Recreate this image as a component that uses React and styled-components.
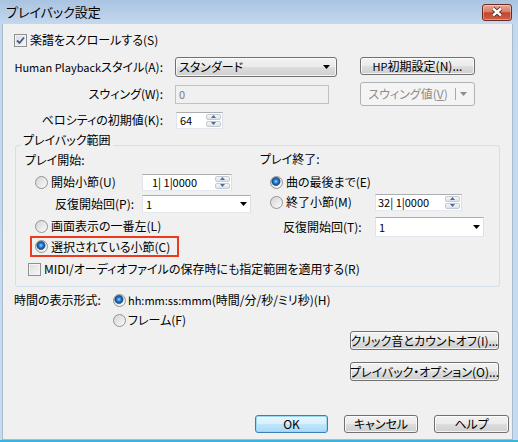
import React from "react";
import styled, { createGlobalStyle, css } from "styled-components";

const GlobalStyle = createGlobalStyle`
  * { box-sizing: border-box; }
  html, body { margin: 0; padding: 0; background: #f0f0f0; }
  body {
    font-family: "Noto Sans CJK JP", "Noto Sans", sans-serif;
    font-size: 12px;
    line-height: 14px;
    color: #000;
    font-feature-settings: "palt";
  }
`;

const Window = styled.div`
  width: 518px;
  height: 442px;
  display: flex;
  flex-direction: column;
  padding: 0 5px 0 2px;
  background: linear-gradient(to bottom, #a9c3e1 0, #c4d8ee 24px, #c6daf0 100%);
  border-bottom: 2px solid #3bb4dc;
`;

const TitleBar = styled.div`
  height: 24px;
  flex: none;
  display: flex;
  align-items: center;
  justify-content: space-between;
  padding: 0 1px 0 4px;
`;

const Title = styled.span`
  font-size: 13px;
  line-height: 16px;
`;

const CloseButton = styled.div`
  width: 30px;
  height: 17px;
  display: flex;
  align-items: center;
  justify-content: center;
  border: 1px solid #6e2b22;
  border-radius: 3px;
  background: linear-gradient(to bottom, #e6a795 0%, #d8806a 45%, #c4442b 52%, #cf6048 100%);
  box-shadow: inset 0 0 0 1px rgba(255, 255, 255, 0.35);
`;

const Client = styled.div`
  flex: 1;
  display: flex;
  flex-direction: column;
  background: #f0f0f0;
  border: 1px solid #a9bbd0;
  border-top: none;
  padding: 6px 3px 6px 11px;
`;

const Latin = styled.span`
  font-size: 11px;
`;

const CheckRow = styled.div`
  display: flex;
  align-items: center;
  gap: 3px;
  height: ${(p) => p.$h || 20}px;
  margin-top: ${(p) => p.$mt || 0}px;
  padding-left: ${(p) => p.$indent || 0}px;
  white-space: nowrap;
`;

const Box = styled.span`
  width: 13px;
  height: 13px;
  flex: none;
  display: flex;
  align-items: center;
  justify-content: center;
  border: 1px solid #8e8f8f;
  background: linear-gradient(135deg, #dcdcdc 0%, #f6f6f6 100%);
  box-shadow: inset 0 0 0 1px #f4f4f4;
`;

const Radio = styled.span`
  width: 13px;
  height: 13px;
  flex: none;
  border-radius: 50%;
  border: 1px solid #939393;
  background: linear-gradient(135deg, #d4d4d4 0%, #fbfbfb 100%);
  ${(p) =>
    p.$checked &&
    css`
      background: radial-gradient(circle at 45% 40%, #9fdcff 0, #2f86d6 1.8px, #0f4e92 3.6px, #6d7f94 4.4px, transparent 4.8px),
        linear-gradient(135deg, #d4d4d4 0%, #fbfbfb 100%);
    `}
`;

const SettingsGrid = styled.div`
  display: grid;
  grid-template-columns: 161px 185px 115px;
  grid-template-rows: 20px 24px 18px;
  row-gap: 5px;
  margin-top: 7px;
`;

const FieldLabel = styled.div`
  align-self: center;
  text-align: right;
  padding-right: 12px;
  white-space: nowrap;
`;

const Cell = styled.div`
  display: flex;
  align-items: ${(p) => p.$align || "center"};
`;

const Button = styled.div`
  width: ${(p) => p.$w}px;
  height: ${(p) => p.$h}px;
  display: flex;
  align-items: center;
  justify-content: center;
  gap: 4px;
  white-space: nowrap;
  border: 1px solid #707070;
  border-radius: 3px;
  background: linear-gradient(to bottom, #f2f2f2 0%, #ebebeb 48%, #dddddd 52%, #cfcfcf 100%);
  box-shadow: inset 0 0 0 1px rgba(255, 255, 255, 0.75);
  ${(p) =>
    p.$primary &&
    css`
      border-color: #3c7fb1;
      background: linear-gradient(to bottom, #eaf6fd 0%, #d9f0fc 48%, #bee6fd 52%, #a7d9f5 100%);
      box-shadow: inset 0 0 0 1px #9ad8f3;
    `}
  ${(p) =>
    p.$disabled &&
    css`
      color: #8d8d8d;
      border-color: #adb2b5;
      background: #f4f4f4;
      box-shadow: none;
    `}
`;

const Separator = styled.span`
  width: 1px;
  height: 12px;
  background: #a8a8a8;
  margin-left: 3px;
`;

const Combo = styled.div`
  width: ${(p) => p.$w}px;
  height: ${(p) => p.$h}px;
  display: flex;
  align-items: center;
  justify-content: space-between;
  padding: 0 6px 0 3px;
  border: 1px solid #707070;
  border-radius: 3px;
  background: linear-gradient(to bottom, #f2f2f2 0%, #ebebeb 48%, #dddddd 52%, #cfcfcf 100%);
  box-shadow: inset 0 0 0 1px rgba(255, 255, 255, 0.75);
`;

const Edit = styled.div`
  width: ${(p) => p.$w}px;
  height: ${(p) => p.$h}px;
  margin-left: ${(p) => p.$ml || 0}px;
  display: flex;
  align-items: center;
  justify-content: space-between;
  padding: 0 ${(p) => p.$pr || 1}px 0 ${(p) => p.$pl || 3}px;
  white-space: pre;
  font-size: 11px;
  background: #fff;
  border: 1px solid;
  border-color: #abadb3 #dbdfe6 #e3e9ef #e2e3ea;
  ${(p) =>
    p.$disabled &&
    css`
      background: #f0f0f0;
      color: #7a7a7a;
      border-color: #c2c2c2;
    `}
`;

const Spinner = styled.span`
  width: 15px;
  height: 100%;
  display: flex;
  flex-direction: column;
  gap: 1px;
  padding: 1px 0;
`;

const SpinHalf = styled.span`
  flex: 1;
  display: flex;
  align-items: center;
  justify-content: center;
  border: 1px solid #c3cad3;
  border-radius: 2px;
  background: linear-gradient(to bottom, #f6f6f6 0%, #dfe2e6 100%);
`;

const GroupBox = styled.div`
  margin: 16px 9px 0 1px;
  border: 1px solid #d5dfe5;
  border-radius: 3px;
  padding: 0 9px 10px 9px;
`;

const GroupTitle = styled.div`
  width: fit-content;
  margin: -13px 0 0 -4px;
  padding: 0 2px;
  background: #f0f0f0;
`;

const Columns = styled.div`
  display: flex;
`;

const Column = styled.div`
  width: ${(p) => (p.$w ? `${p.$w}px` : "auto")};
  flex: ${(p) => (p.$w ? "none" : 1)};
  display: flex;
  flex-direction: column;
`;

const Line = styled.div`
  display: flex;
  align-items: center;
  height: ${(p) => p.$h}px;
  margin-top: ${(p) => p.$mt || 0}px;
  padding-left: ${(p) => p.$indent || 0}px;
  white-space: nowrap;
`;

const LabelCell = styled.div`
  width: ${(p) => p.$w}px;
  flex: none;
  display: flex;
  align-items: center;
  gap: 3px;
  padding-left: ${(p) => p.$pad || 0}px;
`;

const Highlight = styled.div`
  display: flex;
  align-items: center;
  gap: 3px;
  height: 21px;
  border: 2px solid #ec3a21;
  padding: 0 7px 0 3px;
`;

const TimeGrid = styled.div`
  display: grid;
  grid-template-columns: 99px auto;
  grid-auto-rows: 18px;
  row-gap: 2px;
  margin-top: 4px;
  align-items: center;
`;

const TimeOption = styled.div`
  grid-column: 2;
  display: flex;
  align-items: center;
  gap: 2px;
`;

const SideButtons = styled.div`
  display: flex;
  flex-direction: column;
  align-items: flex-end;
  gap: 12px;
  margin-top: 2px;
  padding-right: 10px;
`;

const Footer = styled.div`
  margin-top: auto;
  display: flex;
  justify-content: flex-end;
  gap: 16px;
`;

const Arrow = () => (
  <svg width="7" height="4" viewBox="0 0 7 4">
    <path d="M0 0h7L3.5 4z" fill="#000" />
  </svg>
);

const SpinArrow = ({ up }) => (
  <svg width="5" height="3" viewBox="0 0 5 3">
    <path d={up ? "M0 3h5L2.5 0z" : "M0 0h5L2.5 3z"} fill="#4c6c9e" />
  </svg>
);

const Check = () => (
  <svg width="9" height="9" viewBox="0 0 9 9">
    <path d="M1 4.5 L3.5 7 L8 1.5" fill="none" stroke="#3d5a8f" strokeWidth="1.8" />
  </svg>
);

const SpinBox = ({ w, h, value, pl }) => (
  <Edit $w={w} $h={h} $pl={pl}>
    <span>{value}</span>
    <Spinner>
      <SpinHalf>
        <SpinArrow up />
      </SpinHalf>
      <SpinHalf>
        <SpinArrow />
      </SpinHalf>
    </Spinner>
  </Edit>
);

const DropList = ({ w, h, value }) => (
  <Edit $w={w} $h={h} $pr={3}>
    <span>{value}</span>
    <Arrow />
  </Edit>
);

export default function App() {
  return (
    <>
      <GlobalStyle />
      <Window>
        <TitleBar>
          <Title>プレイバック設定</Title>
          <CloseButton>
            <svg width="14" height="10" viewBox="0 0 14 10">
              <path d="M3 1.5 L11 8.5 M11 1.5 L3 8.5" stroke="#4a1a12" strokeWidth="4" />
              <path d="M3 1.5 L11 8.5 M11 1.5 L3 8.5" stroke="#fff" strokeWidth="2.4" />
            </svg>
          </CloseButton>
        </TitleBar>

        <Client>
          <CheckRow>
            <Box>
              <Check />
            </Box>
            <span>楽譜をスクロールする(S)</span>
          </CheckRow>

          <SettingsGrid>
            <FieldLabel>
              <Latin>Human Playback</Latin>スタイル(A):
            </FieldLabel>
            <Cell>
              <Combo $w={162} $h={20}>
                <span>スタンダード</span>
                <Arrow />
              </Combo>
            </Cell>
            <Cell $align="flex-start">
              <Button $w={115} $h={18}>
                <span>
                  <Latin>HP</Latin>初期設定(N)...
                </span>
              </Button>
            </Cell>

            <FieldLabel>スウィング(W):</FieldLabel>
            <Cell>
              <Edit $w={154} $h={19} $disabled>0</Edit>
            </Cell>
            <Cell>
              <Button $w={115} $h={24} $disabled>
                <span>
                  スウィング値(<u>V</u>)
                </span>
                <Separator />
                <svg width="7" height="4" viewBox="0 0 7 4">
                  <path d="M0 0h7L3.5 4z" fill="#8d8d8d" />
                </svg>
              </Button>
            </Cell>

            <FieldLabel>ベロシティの初期値(K):</FieldLabel>
            <Cell>
              <Edit $w={47} $h={17} $ml={1} $pr={1}>
                <span>64</span>
                <Spinner>
                  <SpinHalf>
                    <SpinArrow up />
                  </SpinHalf>
                  <SpinHalf>
                    <SpinArrow />
                  </SpinHalf>
                </Spinner>
              </Edit>
            </Cell>
          </SettingsGrid>

          <GroupBox>
            <GroupTitle>プレイバック範囲</GroupTitle>
            <Columns>
              <Column $w={235}>
                <Line $h={14} $mt={6}>
                  プレイ開始:
                </Line>
                <Line $h={18} $mt={6}>
                  <LabelCell $w={117} $pad={10}>
                    <Radio />
                    <span>開始小節(U)</span>
                  </LabelCell>
                  <SpinBox w={90} h={17} value="1| 1|0000" pl={9} />
                </Line>
                <Line $h={18} $mt={4}>
                  <LabelCell $w={117} $pad={30}>
                    反復開始回(P):
                  </LabelCell>
                  <DropList w={109} h={18} value="1" />
                </Line>
                <Line $h={18} $mt={4} $indent={10}>
                  <LabelCell $w={200}>
                    <Radio />
                    <span>画面表示の一番左(L)</span>
                  </LabelCell>
                </Line>
                <Line $h={21} $mt={1} $indent={5}>
                  <Highlight>
                    <Radio $checked />
                    <span>選択されている小節(C)</span>
                  </Highlight>
                </Line>
              </Column>

              <Column>
                <Line $h={14} $mt={5}>
                  プレイ終了:
                </Line>
                <Line $h={18} $mt={7} $indent={10}>
                  <LabelCell $w={150}>
                    <Radio $checked />
                    <span>曲の最後まで(E)</span>
                  </LabelCell>
                </Line>
                <Line $h={18} $mt={2}>
                  <LabelCell $w={115} $pad={10}>
                    <Radio />
                    <span>終了小節(M)</span>
                  </LabelCell>
                  <SpinBox w={87} h={17} value="32| 1|0000" pl={2} />
                </Line>
                <Line $h={20} $mt={6}>
                  <LabelCell $w={115} $pad={23}>
                    反復開始回(T):
                  </LabelCell>
                  <DropList w={109} h={20} value="1" />
                </Line>
              </Column>
            </Columns>
            <CheckRow $h={14} $mt={5} $indent={3}>
              <Box />
              <span>MIDI/オーディオファイルの保存時にも指定範囲を適用する(R)</span>
            </CheckRow>
          </GroupBox>

          <TimeGrid>
            <span>時間の表示形式:</span>
            <TimeOption>
              <Radio $checked />
              <span>
                <Latin>hh:mm:ss:mmm</Latin>(時間/分/秒/ミリ秒)(H)
              </span>
            </TimeOption>
            <TimeOption>
              <Radio />
              <span>フレーム(F)</span>
            </TimeOption>
          </TimeGrid>

          <SideButtons>
            <Button $w={149} $h={19}>クリック音とカウントオフ(I)...</Button>
            <Button $w={149} $h={19}>プレイバック・オプション(O)...</Button>
          </SideButtons>

          <Footer>
            <Button $w={73} $h={18} $primary>
              OK
            </Button>
            <Button $w={74} $h={18}>キャンセル</Button>
            <Button $w={75} $h={18}>ヘルプ</Button>
          </Footer>
        </Client>
      </Window>
    </>
  );
}
